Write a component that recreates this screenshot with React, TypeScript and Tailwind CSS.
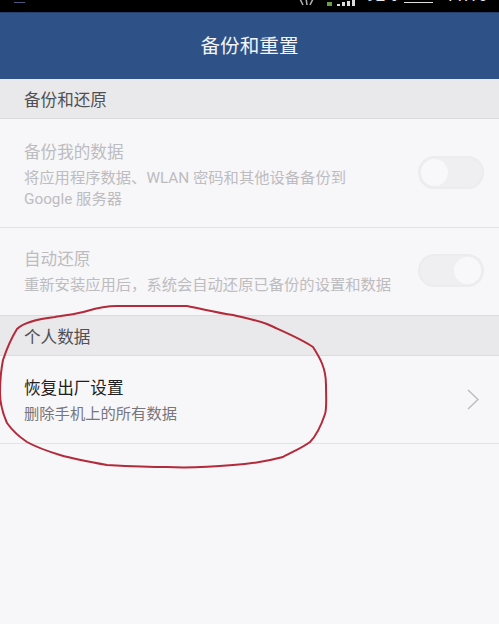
const cjk = "font-['Roboto','Noto_Sans_CJK_SC',sans-serif]";

function Section({ label }: { label: string }) {
  return (
    <div className="h-[40px] bg-[#e9e8ea] border-b border-[#dcdbdd] pl-6 pt-[6px] flex items-center text-[16.6px] text-[#505052]">
      {label}
    </div>
  );
}

function Toggle({ on }: { on?: boolean }) {
  return (
    <div className={`w-[66px] h-[33px] rounded-full border-2 border-[#ecebed] bg-[#efeef0] flex items-center ${on ? "justify-end" : "justify-start"}`}>
      <div className="w-[27px] h-[27px] rounded-full bg-[#f8f7f9] mx-[1px]" />
    </div>
  );
}

export default function App() {
  return (
    <div className={`relative w-[499px] h-[624px] overflow-hidden bg-[#f7f6f9] ${cjk}`}>
      <div className="h-[12px] bg-black overflow-hidden relative">
        <div className="absolute left-[14px] top-0 w-[11px] h-[3px] border-b border-[#4a5a80]" />
        <div className="absolute left-0 top-0 w-full h-[12px]">
          <svg className="absolute left-[298px] top-[-8px]" width="20" height="14" viewBox="0 0 20 14">
            <path d="M2 7 L5 13 M8 6 L9 13 M15 7 L12 13" stroke="#b5b5b5" strokeWidth="1.5" />
          </svg>
          <div className="absolute left-[327px] top-0 h-[6px] flex items-end gap-[2px]">
            <div className="w-[5px] h-[4px] bg-[#6f9a4a] mr-[3px]" />
            <div className="w-[3px] h-[2px] bg-[#ddd]" />
            <div className="w-[3px] h-[4px] bg-[#ddd]" />
            <div className="w-[3px] h-[5px] bg-[#ddd]" />
            <div className="w-[3px] h-[6px] bg-[#ddd]" />
          </div>
          <span className="absolute left-[366px] top-[-15px] text-[17px] leading-[20px] text-[#e8e8e8]">92%</span>
          <div className="absolute left-[404px] top-[2px] w-[29px] h-[1px] bg-[#e0e0e0]" />
          <span className="absolute left-[445px] top-[-15px] text-[17px] leading-[20px] text-[#e8e8e8]">11:16</span>
        </div>
      </div>

      <div className="h-[67px] bg-[#2e5288] border-t border-[#25406c] pt-[2px] flex items-center justify-center text-[19.6px] text-[#f2f4f8]">
        备份和重置
      </div>

      <Section label="备份和还原" />

      <div className="h-[109px] border-b border-[#e3e2e4] pl-6 pr-[15px] flex items-center justify-between">
        <div className="pt-[5px]">
          <div className="text-[16.6px] leading-[24px] text-[#bdbcbe]">备份我的数据</div>
          <div className="text-[15.3px] leading-[21px] mt-[3px] text-[#bdbcbe] whitespace-nowrap">
            将应用程序数据、WLAN 密码和其他设备备份到
            <br />
            Google 服务器
          </div>
        </div>
        <div className="pb-[2px]">
          <Toggle />
        </div>
      </div>

      <div className="h-[88px] border-b border-[#dcdbdd] pl-6 pr-[15px] relative">
        <div className="pt-[20px] text-[16.6px] leading-[24px] text-[#bdbcbe]">自动还原</div>
        <div className="text-[15.3px] leading-[23px] mt-[2px] text-[#bdbcbe] whitespace-nowrap">
          重新安装应用后，系统会自动还原已备份的设置和数据
        </div>
        <div className="absolute right-[15px] top-[26px]">
          <Toggle on />
        </div>
      </div>

      <Section label="个人数据" />

      <div className="h-[88px] border-b border-[#e3e2e4] pl-6 pr-[20px] flex items-center justify-between">
        <div className="pt-[3px]">
          <div className="text-[16.6px] leading-[24px] text-[#1e1e20]">恢复出厂设置</div>
          <div className="text-[15.3px] leading-[23px] mt-[2px] text-[#77767a]">删除手机上的所有数据</div>
        </div>
        <svg width="12" height="21" viewBox="0 0 12 21" fill="none" stroke="#bcbbbe" strokeWidth="1.4">
          <path d="M1 1 L11 10.5 L1 20" />
        </svg>
      </div>

      <svg className="absolute left-0 top-0 pointer-events-none" width="499" height="624" viewBox="0 0 499 624" fill="none">
        <path
          d="M17 329 C24 322 38 319 55 317 C66 315 78 314 87 311 C97 308 106 306 117 306 L187 306 C203 309 218 313 233 315 C245 318 256 320 267 324 C282 331 300 338 313 347 C320 358 326 368 326 385 C326 398 327 408 325 414 C321 426 316 436 310 442 C302 448 292 452 283 457 C268 461 250 464 233 465 C210 467 188 468 167 467 C146 467 126 466 107 465 C90 462 74 459 60 455 C47 451 36 447 27 442 C18 436 12 430 7 423 C3 414 0 404 0 393 C0 381 1 370 3 360 C7 348 12 337 17 329 Z"
          stroke="#b32a3b"
          strokeWidth="2"
        />
      </svg>
    </div>
  );
}
